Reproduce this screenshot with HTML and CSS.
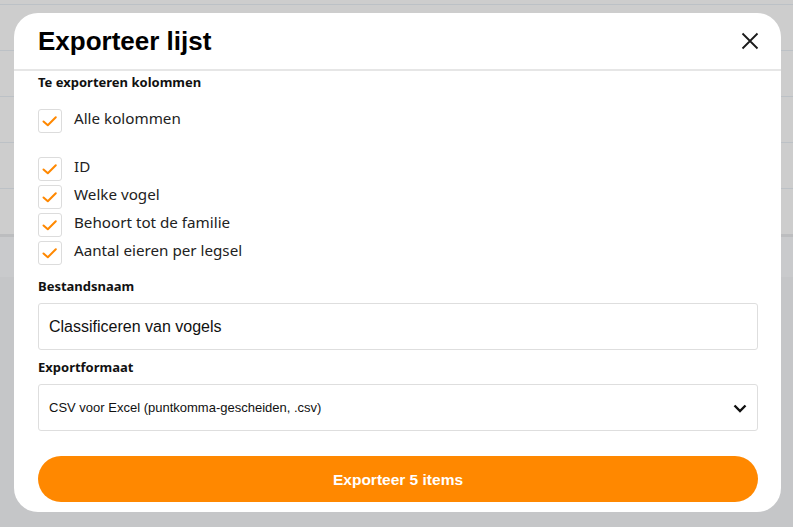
FILE: index.html
```html
<!DOCTYPE html>
<html lang="nl">
<head>
<meta charset="utf-8">
<title>Exporteer lijst</title>
<link rel="stylesheet" href="styles.css">
</head>
<body>
<div class="page">
  <div class="row row-first"></div>
  <div class="row"></div>
  <div class="row"></div>
  <div class="row"></div>
  <div class="row"></div>
  <div class="row row-last"></div>
  <div class="band"></div>
  <div class="rest"></div>
</div>

<div class="modal" role="dialog" aria-labelledby="modal-title">
  <header class="modal-header">
    <h1 id="modal-title" class="modal-title">Exporteer lijst</h1>
    <button class="close-btn" aria-label="Sluiten">
      <svg width="18" height="18" viewBox="0 0 18 18"><path d="M1.5 1.5 L16.5 16.5 M16.5 1.5 L1.5 16.5" stroke="#1a1a1a" stroke-width="1.8" fill="none"/></svg>
    </button>
  </header>
  <div class="modal-body">
    <div class="label label-columns">Te exporteren kolommen</div>
    <label class="check check-all">
      <span class="box"><svg width="24" height="24" viewBox="0 0 24 24"><path d="M5.5 12.5 L9.8 16.3 L17.8 8.2" stroke="#ff8800" stroke-width="2" fill="none" stroke-linecap="round" stroke-linejoin="round"/></svg></span>
      <span class="check-text">Alle kolommen</span>
    </label>
    <div class="check-list">
      <label class="check">
        <span class="box"><svg width="24" height="24" viewBox="0 0 24 24"><path d="M5.5 12.5 L9.8 16.3 L17.8 8.2" stroke="#ff8800" stroke-width="2" fill="none" stroke-linecap="round" stroke-linejoin="round"/></svg></span>
        <span class="check-text">ID</span>
      </label>
      <label class="check">
        <span class="box"><svg width="24" height="24" viewBox="0 0 24 24"><path d="M5.5 12.5 L9.8 16.3 L17.8 8.2" stroke="#ff8800" stroke-width="2" fill="none" stroke-linecap="round" stroke-linejoin="round"/></svg></span>
        <span class="check-text">Welke vogel</span>
      </label>
      <label class="check">
        <span class="box"><svg width="24" height="24" viewBox="0 0 24 24"><path d="M5.5 12.5 L9.8 16.3 L17.8 8.2" stroke="#ff8800" stroke-width="2" fill="none" stroke-linecap="round" stroke-linejoin="round"/></svg></span>
        <span class="check-text">Behoort tot de familie</span>
      </label>
      <label class="check">
        <span class="box"><svg width="24" height="24" viewBox="0 0 24 24"><path d="M5.5 12.5 L9.8 16.3 L17.8 8.2" stroke="#ff8800" stroke-width="2" fill="none" stroke-linecap="round" stroke-linejoin="round"/></svg></span>
        <span class="check-text">Aantal eieren per legsel</span>
      </label>
    </div>

    <div class="label label-file">Bestandsnaam</div>
    <div class="field field-input">Classificeren van vogels</div>

    <div class="label label-format">Exportformaat</div>
    <div class="field field-select">
      <span>CSV voor Excel (puntkomma-gescheiden, .csv)</span>
      <svg class="chevron" width="14" height="9" viewBox="0 0 14 9"><path d="M1.5 1.5 L7 7 L12.5 1.5" stroke="#111" stroke-width="2.4" fill="none"/></svg>
    </div>

    <button class="export-btn">Exporteer 5 items</button>
  </div>
</div>
</body>
</html>
```
FILE: styles.css
```css
html, body {
  margin: 0;
  padding: 0;
}
body {
  width: 793px;
  height: 527px;
  overflow: hidden;
  background: #c5c6c8;
  font-family: "Noto Sans", Arial, sans-serif;
}

/* dimmed page underneath */
.page {
  display: flex;
  flex-direction: column;
}
.row {
  height: 45px;
  background: #cdcdcd;
  border-bottom: 1px solid #bcc1c6;
}
.row-first {
  height: 4px;
}
.row-last {
  height: 45px;
  border-bottom: none;
}
.band {
  height: 3px;
  background: #bcbdbf;
}
.rest {
  height: 40px;
  background: #c9cacc;
}

/* modal */
.modal {
  position: absolute;
  left: 14px;
  top: 13px;
  width: 767px;
  height: 499px;
  background: #fff;
  border-radius: 24px;
  display: flex;
  flex-direction: column;
}
.modal-header {
  height: 56px;
  border-bottom: 2px solid #e6e6e6;
  display: flex;
  align-items: center;
  justify-content: space-between;
  padding: 0 22px 0 24px;
}
.modal-title {
  margin: 0;
  padding-top: 1px;
  font-family: "Liberation Sans", Arial, sans-serif;
  font-weight: bold;
  font-size: 26px;
  color: #000;
}
.close-btn {
  border: none;
  background: none;
  padding: 0;
  width: 18px;
  height: 18px;
  display: flex;
  margin-top: 0;
}

.modal-body {
  padding: 0 23px 0 24px;
  display: flex;
  flex-direction: column;
}
.label {
  font-family: "Noto Sans", Arial, sans-serif;
  font-weight: bold;
  font-size: 13px;
  line-height: 18px;
  color: #111;
}
.label-columns {
  margin-top: 2px;
}

.check {
  display: flex;
  align-items: center;
  height: 24px;
  gap: 12px;
}
.check-all {
  margin-top: 18px;
}
.check-list {
  margin-top: 24px;
  display: flex;
  flex-direction: column;
  gap: 4px;
}
.box {
  width: 22px;
  height: 22px;
  border: 1px solid #dcdcdc;
  border-radius: 3px;
  display: flex;
  align-items: center;
  justify-content: center;
  overflow: hidden;
}
.box svg {
  flex: none;
}
.check-text {
  font-size: 15.2px;
  line-height: 20px;
  color: #222;
  margin-top: -6px;
}

.label-file {
  margin-top: 12px;
}
.field {
  box-sizing: border-box;
  border: 1px solid #dedede;
  border-radius: 3px;
  height: 47px;
  display: flex;
  align-items: center;
  padding: 0 10px;
  font-family: "Liberation Sans", Arial, sans-serif;
  color: #111;
}
.field-input {
  margin-top: 8px;
  font-size: 16px;
}
.label-format {
  margin-top: 8px;
}
.field-select {
  margin-top: 8px;
  font-size: 13px;
  justify-content: space-between;
  padding-right: 10px;
}
.chevron {
  margin-top: 1px;
}

.export-btn {
  margin-top: 25px;
  height: 46px;
  padding-top: 3px;
  border: none;
  border-radius: 23px;
  background: #ff8800;
  color: #fff;
  font-family: "Liberation Sans", Arial, sans-serif;
  font-weight: bold;
  font-size: 15.5px;
  cursor: pointer;
}
```
